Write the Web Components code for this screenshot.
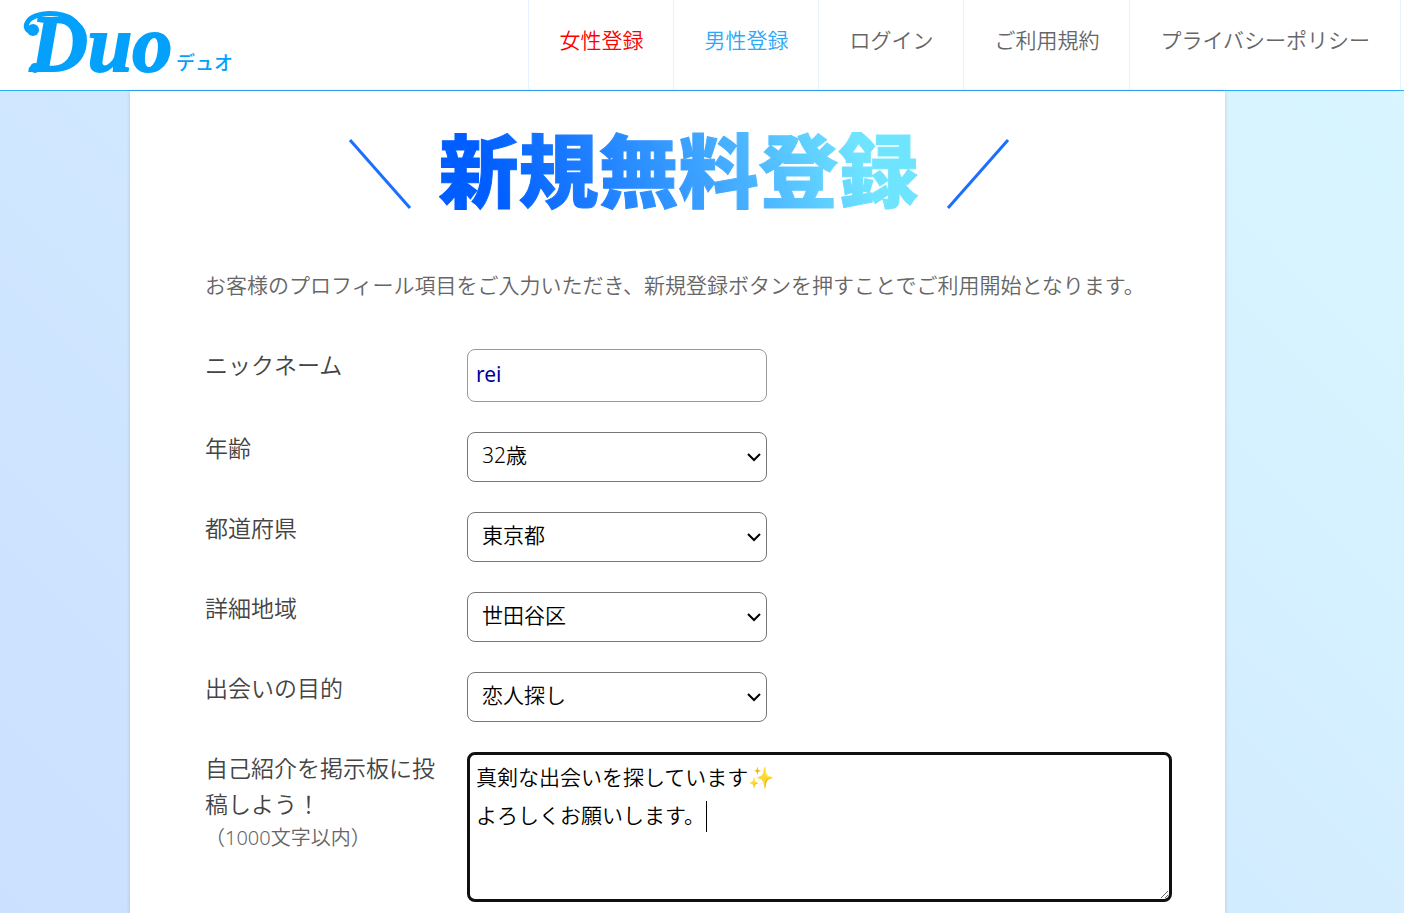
<!DOCTYPE html>
<html lang="ja">
<head>
<meta charset="utf-8">
<meta name="viewport" content="width=device-width, initial-scale=1">
<title>Duo 新規無料登録</title>
<style>
html{height:100%}
body{margin:0;min-height:100%;font-family:"Noto Sans","Noto Sans CJK JP",sans-serif;font-weight:350;font-size:21px;color:#666;background:linear-gradient(45deg,#cbdfff,#d9f7ff) no-repeat}
</style>
</head>
<body>
<duo-header>
  <duo-nav-item tone="female" href="#female">女性登録</duo-nav-item>
  <duo-nav-item tone="male" href="#male">男性登録</duo-nav-item>
  <duo-nav-item href="#login">ログイン</duo-nav-item>
  <duo-nav-item href="#terms">ご利用規約</duo-nav-item>
  <duo-nav-item href="#privacy">プライバシーポリシー</duo-nav-item>
</duo-header>
<duo-card>
  <duo-title>新規無料登録</duo-title>
  <duo-intro>お客様のプロフィール項目をご入力いただき、新規登録ボタンを押すことでご利用開始となります。</duo-intro>
  <duo-form>
    <duo-text label="ニックネーム" value="rei"></duo-text>
    <duo-select label="年齢" value="32歳"></duo-select>
    <duo-select label="都道府県" value="東京都"></duo-select>
    <duo-select label="詳細地域" value="世田谷区"></duo-select>
    <duo-select label="出会いの目的" value="恋人探し"></duo-select>
    <duo-textarea label="自己紹介を掲示板に投稿しよう！" note="（1000文字以内）">真剣な出会いを探しています✨
よろしくお願いします。</duo-textarea>
  </duo-form>
</duo-card>
<script>
const define = (name, html, setup) => customElements.define(name, class extends HTMLElement {
  connectedCallback() {
    if (this.shadowRoot) return;
    const t = document.createElement('template');
    t.innerHTML = html;
    this.attachShadow({ mode: 'open' }).append(t.content.cloneNode(true));
    if (setup) setup(this, this.shadowRoot);
  }
});

define('duo-logo', `
<style>
:host{display:block;color:#03a1fb}
a{display:flex;color:inherit;text-decoration:none}
svg{display:block;width:240px;height:90px;fill:currentColor;overflow:visible}
.name{font:italic 700 80px "Liberation Serif",serif;stroke:currentColor;stroke-width:2px}
.kana{font:500 19px "Noto Sans CJK JP",sans-serif}
.swash{fill:none;stroke:currentColor;stroke-width:5px;stroke-linecap:round}
</style>
<a href="#top" aria-label="Duo デュオ"><svg viewBox="0 0 240 90">
<path class="swash" d="M80 30 C74 11 42 10 30 19 C23 26 27 34 35 31"/><circle cx="33" cy="30" r="6"/><circle cx="35" cy="68" r="5"/>
<text class="name" x="30" y="71">Duo</text><text class="kana" x="176" y="70">デュオ</text></svg></a>`);

define('duo-header', `
<style>
:host{display:block;background:#fff;border-bottom:1px solid #2ba8f8}
header{display:flex;justify-content:space-between;height:90px;padding-right:3px}
nav{display:flex;border-left:1px solid #e4f1ff}
</style>
<header><duo-logo></duo-logo><nav><slot></slot></nav></header>`);

define('duo-nav-item', `
<style>
:host{display:block;border-right:1px solid #e4f1ff}
a{display:block;padding:24px 30px;line-height:32px;font-size:21px;color:#666;text-decoration:none;white-space:nowrap}
:host([tone=female]) a{color:#f00}
:host([tone=male]) a{color:#2ba8f8}
</style>
<a><slot></slot></a>`, (h, r) => r.querySelector('a').href = h.getAttribute('href'));

define('duo-card', `
<style>
:host{display:block;padding:0 179px 0 130px}
main{background:#fff;padding:27px 53px 11px 75px;box-shadow:0 0 4px #00000026}
</style>
<main><slot></slot></main>`);

define('duo-title', `
<style>
:host{display:flex;justify-content:center;align-items:end;gap:27px;margin-right:20px}
h1{margin:0;font:900 80px/96px "Noto Sans CJK JP",sans-serif;color:transparent;background:linear-gradient(70deg,#005dff 12%,#3ea4ff 55%,#6fe4ff 86%);background-clip:text;-webkit-background-clip:text;-webkit-text-stroke:1px transparent}
svg{width:64px;height:76px;fill:none;stroke:#1a6fff;stroke-width:3px}
</style>
<svg viewBox="0 0 64 76"><path d="M2 2L62 70"/></svg><h1><slot></slot></h1><svg viewBox="0 0 64 76"><path d="M62 2L2 70"/></svg>`);

define('duo-intro', `
<style>
:host{display:block;margin:55px 0 48px}
p{margin:0;line-height:32px;font-size:21px}
</style>
<p><slot></slot></p>`);

define('duo-form', `
<style>
:host{display:block}
form{display:flex;flex-direction:column;gap:30px}
</style>
<form><slot></slot></form>`);

const row = `
:host{display:grid;grid-template-columns:240px minmax(0,1fr);column-gap:22px;align-items:start}
label{margin-top:-2px;font-size:23px;line-height:36px;color:#444}
small{display:block;font-size:20px;line-height:32px;color:#666}
input,select,textarea{box-sizing:border-box;margin:0;font:inherit;font-size:21px;background:#fff;border-radius:8px}
`;

define('duo-text', `
<style>${row}
input{width:300px;height:53px;padding:0 8px 4px;border:1px solid #999;font-weight:400;color:#00009c}
</style>
<label for="f"></label><input id="f" type="text">`, (h, r) => {
  r.querySelector('label').textContent = h.getAttribute('label');
  r.querySelector('input').value = h.getAttribute('value');
});

define('duo-select', `
<style>${row}
.box{display:grid;width:300px}
.box>*{grid-area:1/1}
select{appearance:none;height:50px;padding:0 30px 4px 14px;border:1px solid #767676;color:#000}
svg{place-self:center end;margin-right:6px;width:14px;height:10px;fill:none;stroke:#000;stroke-width:2px;pointer-events:none}
</style>
<label for="f"></label><div class="box"><select id="f"></select><svg viewBox="0 0 14 10"><path d="M1 2l6 6 6-6"/></svg></div>`, (h, r) => {
  r.querySelector('label').textContent = h.getAttribute('label');
  r.querySelector('select').add(new Option(h.getAttribute('value')));
});

define('duo-textarea', `
<style>${row}
.box{display:grid;position:relative}
textarea{width:100%;height:150px;padding:3px 6px;border:3px solid #101010;line-height:38px;color:#000;outline:0;resize:vertical}
i{position:absolute;left:239px;top:49px;width:1px;height:31px;background:#000}
</style>
<label for="f"><span></span><small></small></label><div class="box"><textarea id="f"></textarea><i></i></div>`, (h, r) => {
  r.querySelector('span').textContent = h.getAttribute('label');
  r.querySelector('small').textContent = h.getAttribute('note');
  r.querySelector('textarea').value = h.textContent;
});
</script>
</body>
</html>
